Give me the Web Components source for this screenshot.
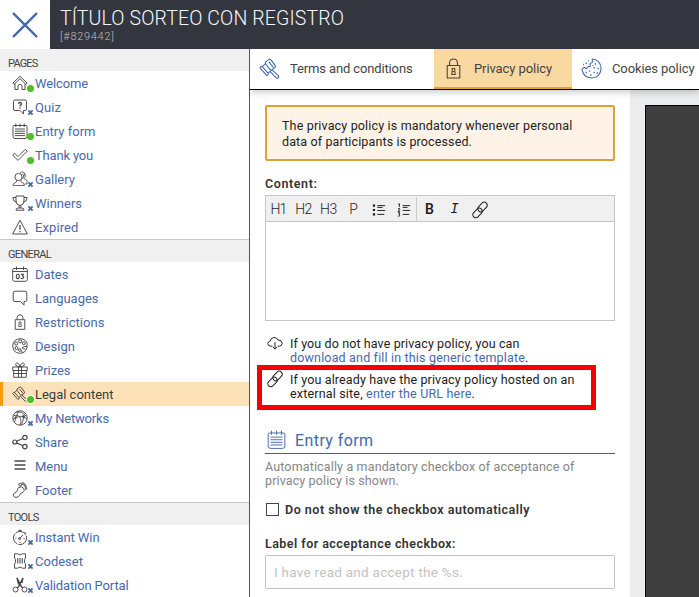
<!DOCTYPE html>
<html lang="en">
<head>
<meta charset="utf-8">
<title>Legal content</title>
<style>
html,body{margin:0;padding:0}
body{width:699px;height:597px;overflow:hidden;background:#fff;font-family:Roboto,"Liberation Sans",sans-serif;font-size:13px;color:#333}
</style>
</head>
<body>
<promo-app></promo-app>
<script>
const ICONS = {
  home:'<path d="M.8 8.2 8 1.2l7.200 7-1.300 1.200L8 3.700 2.100 9.400zM3 8.800V14.500H6V10.500Q8 8 10 10.500V14.500H13V8.800"/>',
  quiz:'<path d="M3 1H13Q14.500 1 14.500 2.500V10Q14.500 11.500 13 11.500H11.500V15L8 11.500H3Q1.500 11.500 1.500 10V2.500Q1.500 1 3 1Z"/><path stroke-width="1.300" d="M6.300 4.700Q6.500 3.500 8 3.500 9.700 3.600 9.600 4.900 9.500 5.900 8 6.500V7.500M8 8.500V9.700"/>',
  form:'<path d="M2 2.500H14Q15 2.500 15 3.500V13.500Q15 15.500 13 15.500H3Q1 15.500 1 13.500V3.500Q1 2.500 2 2.500ZM3.800.5V4M8 .5V4M12.200.5V4M3 6H13M3 8.200H13M3 10.400H13M3 12.600H13"/>',
  check:'<path d="M.8 8.300 2.700 6.400 6 9.600 13.300 2.300 15.200 4.200 6 13.400Z"/>',
  gallery:'<circle cx="6.500" cy="6" r="3.600"/><path stroke-width=".8" d="M8 2.200Q8 .8 10.500.8 13.700 1.500 13.300 5 13 6.500 12 7.500L15 9.500V13H12.500M10 3Q12 3 11.500 6L10.500 8M4.500 9.300V11Q1 11.500.8 14.500H12.500Q12 11.500 9 11V9.300M13 4.500 12 2.500"/>',
  cup:'<path d="M4 1H12V6Q12 10 8 10.500 4 10 4 6ZM4 2.500H.8Q1 7 5 7.500M12 2.500H15.200Q15 7 11 7.500M7.200 10.500V13M8.800 10.500V13M4 15.200Q4 13 6 13H10Q12 13 12 15.200Z"/>',
  warn:'<path d="M8 1.200 15.400 15H.6Z"/><path stroke-width="1.300" d="M8 6V10.700M8 12V13.300"/>',
  date:'<path d="M2 2.500H14Q15.300 2.500 15.300 4V13.500Q15.300 15.300 13.500 15.300H2.500Q.7 15.300.7 13.500V4Q.7 2.500 2 2.500ZM.8 5.500H15.200M4.500.5V4M11.500.5V4"/><g stroke-width="1.100"><ellipse cx="5.800" cy="10.400" rx="1.500" ry="2.200"/><path d="M9 8.300H11.600L10.200 9.900Q12 10 11.700 11.500 10.800 13.200 8.800 12.200"/></g>',
  speech:'<path d="M3 1.200H13Q14.800 1.200 14.800 3V10Q14.800 11.500 13.200 11.500H12V15.200L8.500 11.500H3Q1.200 11.500 1.200 10V3Q1.200 1.200 3 1.200Z"/>',
  lock:'<path d="M3.200 5.700H12.800V15.300H3.200ZM5 5.500V3.500Q5.300.8 8 .8 10.700.8 11 3.500V5.500"/><path stroke-width=".8" d="M7 8H9V10.200L9.300 12.500H6.700L7 10.200ZM7.500 10.300H8.500"/>',
  palette:'<path d="M15.300 8Q14.500 15.300 7.500 15.300 1.300 14.800.7 8 1.300 1.200 8 .7 14.200 1 15.300 6L14.500 8.500 12.300 8.500 10 9.800Q11 11 13.500 11M10.500 14.800 9.500 12.500"/><circle cx="4.200" cy="5.500" r="1.500"/><circle cx="8.200" cy="3.400" r="1.500"/><circle cx="11.800" cy="5.200" r="1.400"/><circle cx="4.500" cy="10" r="1.500"/><circle cx="7.800" cy="12" r="1.300"/>',
  gift:'<path d="M.7 5H15.300V8.500H.7ZM1.700 8.500H14.300V15.300H1.700ZM6.500 5V15.300M9.500 5V15.300M1.700 11.500H14.300M7.500 5Q3.500 4.500 3.500 2 4.500.2 6.300 1.500 7.500 2.500 8 5 8.500 2.500 9.700 1.500 11.500.2 12.500 2 12.500 4.500 8.500 5"/>',
  gavel:'<path d="M5 3 8 .8 9.300 1.600 12.500 6 12.300 7.200 9.500 9.200 8.300 8.700 4.900 4.300ZM4.900 4.300 2.500 6.500 1.800 6.200.7 7.500 6 13.500 7.200 12.500 6.900 11.500 9.500 9.200M2.500 6.500 6.900 11.500M7.500 3 11 7.300M9.900 9 14.800 13.500Q15.500 14.500 14.600 15.200 13.700 15.600 12.900 14.900L8.600 10.300"/>',
  net:'<circle cx="8" cy="8" r="7.200"/><path stroke-width=".85" d="M1.200 5.800Q7 4 8.500 8.500 10 12 8 15M4 2.200Q10 1 14 6M1 9Q5 6 11 6.500L15 9M2.500 12.500Q3 7 7 1M12 7 9.500 14.800"/><circle cx="11.500" cy="6.500" r="1.100" fill="currentColor"/><circle cx="4" cy="7.500" r=".7" fill="currentColor"/>',
  share:'<g stroke-width="1.200"><circle cx="2.800" cy="8" r="2"/><circle cx="12.900" cy="3.500" r="2.200"/><circle cx="12.900" cy="12.600" r="2.200"/><path d="M4.700 7.200 10.700 4.500M4.700 8.900 10.700 11.700"/></g>',
  menu:'<path stroke-width="1.700" d="M2.500 3H13.500M2.500 7H13.500M2.500 11H13.500"/>',
  foot:'<path d="M6.500 5.500Q9.300 3.800 11.600 6.200 13.500 9 10.800 10.500 8.500 10.500 7.500 13.500 6 15.800 3 15.300.2 14 1.500 11.800L4.800 9.600Q5.400 7 6.500 5.500Z"/><circle cx="8.200" cy="2.600" r="1.400"/><circle cx="10.900" cy="1.600" r="1"/><circle cx="12.700" cy="2.900" r=".9"/><circle cx="13.800" cy="4.800" r=".8"/><circle cx="14.100" cy="6.800" r=".7"/>',
  watch:'<circle cx="8" cy="9" r="6.600" stroke-dasharray="12 1"/><path d="M6.300 1.300H9.700M8 1.300V3M12.500 3 14 4.500M7.500 9.700 11 6M3.500 9H4.500M11.500 9.500H12.500M8 13V14"/><circle cx="7.600" cy="9.600" r="1"/>',
  ticket:'<path d="M2.500.8H5.500Q8 3 10.500.8H13.500V5L12.500 6.500V9.500L13.500 11V15.200H10.500Q8 13 5.500 15.200H2.500V11L3.500 9.500V6.500L2.500 5Z"/><path stroke-width=".8" d="M5.500 5V10.500M7.200 5V10.500M8.800 5V10.500M10.500 5V10.500"/>',
  cut:'<circle cx="3.500" cy="12.500" r="2.500"/><circle cx="12.500" cy="12.500" r="2.500"/><path stroke-width="1.400" d="M5 .8 9.500 10 11 11M11 .8 6.500 10 5 11M5 .8 6.200 6 8 9M11 .8 9.800 6"/>',
  cookie:'<path d="M8.500.7Q15 1.300 15.300 8 14.700 15 8 15.300 1.500 14.800.7 8.500L2.500 7 4 8.200 5.500 6.500 7.200 6.300 6.800 4.300 8.700 3.200Z"/><path stroke-width="1.100" d="M10.500 4.500H11.500M9.500 7.500H10.500M12.500 8H13.500M6 10H7M9.500 11H10.500M7 13H8M12 11.500H13M3.500 11H4.500M3.500 4H4.500M5.300 2.200H6M1.500 5H2.200M8.800 5.800H9.500"/>',
  cloud:'<path d="M5.500 10.200H3.500Q.8 10 .8 7.500 1 5.500 3.200 5 3.500 1.800 7 1.500 10 1.500 11 4 15 4 15.200 7.200 15 10 12.500 10.200H10.500M8 6V13M6 11 8 13.200 10 11"/>',
  link:'<rect x="5.100" y="2" width="10.800" height="6" rx="3" transform="rotate(-45 10.500 5)"/><rect x=".1" y="8" width="10.800" height="6" rx="3" transform="rotate(-45 5.500 11)"/>',
  close:'<path d="M1 1 15 15M15 1 1 15" stroke-linecap="round"/>',
  bullets:'<path d="M6 3H15M6 5H12M6 8.500H15M6 13H14" stroke-width="1.100"/><path stroke-width="2.300" d="M1 3H3.500M1 8H3.500M1 13H3.500"/>',
  numbers:'<path d="M6.500 3H15M6.500 5H12M6.500 8.500H15M6.500 13H14M1.500 1.500 2.700.8V4.500M1.200 6.500Q3 5.500 3.300 7L1.200 9.500H3.500M1.200 11.200H3.300L2.200 12.800Q4 13.500 3 14.700 2 15.600 1 14.800" stroke-width="1.100"/>'
};

const define = (tag, css, html) => customElements.define(tag, class extends HTMLElement {
  constructor() { super(); this.attachShadow({mode:'open'}); }
  connectedCallback() {
    this.shadowRoot.innerHTML = `<style>${css}</style>${typeof html === 'function' ? html(this) : html}`;
  }
});

/* Single line of text tracked out to a given width */
const fitted = [];
customElements.define('fit-text', class extends HTMLElement {
  constructor() {
    super();
    this.attachShadow({mode:'open'}).innerHTML = '<style>:host{display:inline-block;white-space:pre}</style><slot></slot>';
  }
  connectedCallback() { fitted.push(this); }
  fit() {
    const extra = this.getAttribute('w') - this.getBoundingClientRect().width;
    this.style.letterSpacing = (extra / this.textContent.length).toFixed(3) + 'px';
  }
});

define('line-icon', `:host{display:block;width:16px;height:16px;flex:none}svg{display:block;width:100%;height:100%;overflow:visible;fill:none;stroke:currentColor;stroke-linejoin:round}`,
  h => `<svg viewBox="0 0 16 16" stroke-width="${h.getAttribute('weight') || .95}">${ICONS[h.getAttribute('name')]}</svg>`);

define('top-bar', `:host{display:flex;height:49px;background:#33363f;color:#f6f6f7}
.x{width:50px;background:#fff;display:grid;place-items:center;color:#4467ad}
.x line-icon{width:26px;height:26px}
.t{padding:7px 0 0 10px;display:flex;flex-direction:column;align-items:flex-start}
.a{font-size:19.500px;line-height:23px;font-weight:350}.b{font-size:11px;line-height:13px;color:#bcbec1;font-weight:350}`,
  `<div class="x"><line-icon name="close" weight="1.400"></line-icon></div><div class="t"><fit-text class="a" w="284">TÍTULO SORTEO CON REGISTRO</fit-text><fit-text class="b" w="54.500">[#829442]</fit-text></div>`);

define('side-group', `:host{display:block}header{box-sizing:border-box;height:23px;padding:5px 0 0 8px;line-height:19px;font-size:11px;background:#f0f0f0;border-top:1px solid #c9c9c9;color:#444;overflow:hidden}:host([first]) header{height:22px;border:0}`,
  h => `<header><fit-text w="${h.getAttribute('w')}">${h.getAttribute('label')}</fit-text></header><slot></slot>`);

define('side-item', `:host{display:flex;box-sizing:border-box;height:24px;padding:0 0 0 12px;gap:7px;align-items:center;color:#4969a9;line-height:24px}
:host([active]){background:#fde2b9;color:#3b3b3b;border-left:3px solid #f29f0e;padding-left:9px}
.i{position:relative;color:#484848;width:16px;height:16px}
.i b{position:absolute;left:15px;top:10px;width:7px;height:7px;border-radius:50%;background:#4fbd28}
:host([active]) .i b{box-shadow:0 0 0 1px #fff}
.i svg{position:absolute;left:16px;top:11px;width:5px;height:5px;stroke:#4467ad;stroke-width:1.800;overflow:visible}
fit-text{padding-top:2px}`,
  h => { const s = h.getAttribute('state');
    const badge = s === 'on' ? '<b></b>' : s === 'off' ? '<svg viewBox="0 0 5 5"><path d="M.4.4 4.600 4.600M4.600.4.4 4.600"/></svg>' : '';
    return `<div class="i"><line-icon name="${h.getAttribute('icon')}"></line-icon>${badge}</div><fit-text w="${h.getAttribute('w')}">${h.textContent}</fit-text>`; });

define('side-nav', `:host{display:block;width:249px;height:548px;overflow:hidden;border-right:1px solid #555;background:#fff}`, `
<side-group first label="PAGES" w="29.500">
<side-item icon="home" state="on" w="53">Welcome</side-item>
<side-item icon="quiz" state="off" w="26">Quiz</side-item>
<side-item icon="form" state="on" w="60.500">Entry form</side-item>
<side-item icon="check" state="on" w="58">Thank you</side-item>
<side-item icon="gallery" state="off" w="40">Gallery</side-item>
<side-item icon="cup" state="off" w="47">Winners</side-item>
<side-item icon="warn" w="43.500">Expired</side-item>
</side-group>
<side-group label="GENERAL" w="43">
<side-item icon="date" w="33.500">Dates</side-item>
<side-item icon="speech" w="63.500">Languages</side-item>
<side-item icon="lock" w="69.500">Restrictions</side-item>
<side-item icon="palette" w="40">Design</side-item>
<side-item icon="gift" w="35.500">Prizes</side-item>
<side-item icon="gavel" state="on" active w="78.500">Legal content</side-item>
<side-item icon="net" state="off" w="74">My Networks</side-item>
<side-item icon="share" w="33.500">Share</side-item>
<side-item icon="menu" w="32.500">Menu</side-item>
<side-item icon="foot" w="37.500">Footer</side-item>
</side-group>
<side-group label="TOOLS" w="30.500">
<side-item icon="watch" state="off" w="64.500">Instant Win</side-item>
<side-item icon="ticket" state="off" w="48">Codeset</side-item>
<side-item icon="cut" state="off" w="93.500">Validation Portal</side-item>
</side-group>`);

define('tab-item', `:host{display:flex;box-sizing:border-box;height:40px;align-items:center;padding:0 0 1px 9px;gap:9px;color:#444}
line-icon{width:21px;height:21px;padding-right:1px;color:#4467ad}
:host([active]){background:#fad8a2;border-bottom:2px solid #e6a132;padding-top:1px;padding-bottom:0}
:host([active]) line-icon{color:#4a4034}`,
  h => `<line-icon name="${h.getAttribute('icon')}" weight=".8"></line-icon><fit-text w="${h.getAttribute('w')}">${h.textContent}</fit-text>`);

define('tab-bar', `:host{display:grid;grid-template-columns:184px 138px 127px;border-bottom:1px solid #000;box-shadow:0 2px 7px rgba(0,0,0,.22);background:#fff;position:relative;z-index:1}`,
  `<tab-item icon="gavel" w="122.500">Terms and conditions</tab-item><tab-item icon="lock" active w="78">Privacy policy</tab-item><tab-item icon="cookie" w="82.500">Cookies policy</tab-item>`);

define('notice-box', `:host{display:block;box-sizing:border-box;height:56px;border:2px solid #dea037;border-radius:2px;background:#fef3e6;padding:11px 15px;line-height:16px;font-size:12.500px;color:#222}`, `<slot></slot>`);

define('rich-editor', `:host{display:block;box-sizing:border-box;height:126px;border:1px solid #c6c6c6}
.bar{display:grid;grid-template-columns:25px 25px 25px 25px 25px 26px 25px 25px 26px;box-sizing:border-box;height:26px;border-bottom:1px solid #c6c6c6;background:#f0f0f0;color:#1c1c1c;place-items:center;font-size:14px;line-height:27px;font-weight:350;justify-content:start}
.n{width:14px;height:14px}.s{box-sizing:border-box;width:100%;height:25px;display:grid;place-items:center;border-right:1px solid #ccc}
b{font-weight:600}i{font-family:"Liberation Mono",monospace;font-size:14px}`,
 `<div class="bar"><fit-text w="16">H1</fit-text><fit-text w="16.500">H2</fit-text><fit-text w="17">H3</fit-text><span>P</span><line-icon class="n" name="bullets"></line-icon><span class="s"><line-icon class="n" name="numbers"></line-icon></span><b>B</b><i>I</i><line-icon name="link"></line-icon></div>`);

define('hint-row', `:host{display:flex;position:relative;gap:7px;padding-left:2px;height:28px;line-height:14px;font-size:12.500px;color:#1d1d1d}
line-icon{margin-top:-1px}
:host([marked]) line-icon{margin-top:-2px}
:host([marked])::after{content:"";position:absolute;left:-8px;top:-8px;width:329px;height:35px;border:5px solid #f40000}`,
 h => `<line-icon name="${h.getAttribute('icon')}"></line-icon><div><slot></slot></div>`);

define('section-title', `:host{display:flex;box-sizing:border-box;height:25px;padding:0 0 1px 2px;gap:9px;align-items:center;color:#4467ad;border-bottom:1px solid #3d5d9b;font-size:16px}line-icon{width:19px;height:19px;margin-top:-2px}`,
 h => `<line-icon name="form" weight=".8"></line-icon><fit-text w="78.500">${h.textContent}</fit-text>`);

define('legal-form', `:host{display:block;box-sizing:border-box;width:380px;padding:15px 15px 0;background:#fff}
.lab{font-weight:600;font-size:12.500px;line-height:16px;color:#333}
.c{margin-top:15px;height:19px}
hint-row{margin-top:16px}hint-row+hint-row{margin-top:8px}
.l{color:#4969a9}
section-title{margin-top:28px}
.p{margin-top:6px;height:28px;line-height:14px;font-size:12.500px;color:#858585}
.k{display:flex;gap:6px;align-items:center;margin-top:14px;padding-left:1px;height:16px}
.k span{box-sizing:border-box;width:13px;height:13px;border:1px solid #444;margin-bottom:2px}
.f{margin-top:18px;height:19px}
.in{box-sizing:border-box;height:34px;border:1px solid #c4c4c4;border-radius:2px;padding-left:8px;line-height:33px;color:#c4c4c4;font-size:13.500px}`, `
<notice-box><fit-text w="290.500">The privacy policy is mandatory whenever personal</fit-text><br><fit-text w="190">data of participants is processed.</fit-text></notice-box>
<div class="lab c"><fit-text w="52.500">Content:</fit-text></div>
<rich-editor></rich-editor>
<hint-row icon="cloud"><fit-text w="229.500">If you do not have privacy policy, you can</fit-text><br><fit-text w="238"><span class="l">download and fill in this generic template</span>.</fit-text></hint-row>
<hint-row icon="link" marked><fit-text w="284.500">If you already have the privacy policy hosted on an</fit-text><br><fit-text w="185">external site, <span class="l">enter the URL here</span>.</fit-text></hint-row>
<section-title>Entry form</section-title>
<div class="p"><fit-text w="309.500">Automatically a mandatory checkbox of acceptance of</fit-text><br><fit-text w="134">privacy policy is shown.</fit-text></div>
<div class="lab k"><span></span><fit-text w="245">Do not show the checkbox automatically</fit-text></div>
<div class="lab f"><fit-text w="191">Label for acceptance checkbox:</fit-text></div>
<div class="in"><fit-text w="189">I have read and accept the %s.</fit-text></div>`);

define('preview-pane', `:host{display:block;flex:1;box-sizing:border-box;padding:15px 0 0 15px;background:#ebecee}div{box-sizing:border-box;height:492px;background:#3f3f3f;border:solid #000;border-width:1px 0 0 1px}`, `<div></div>`);

define('promo-app', `:host{display:block;width:699px;height:597px;overflow:hidden}.body{display:flex;height:548px}main{width:449px;height:548px;overflow:hidden}.cols{display:flex;height:507px}`,
 `<top-bar></top-bar><div class="body"><side-nav></side-nav><main><tab-bar></tab-bar><div class="cols"><legal-form></legal-form><preview-pane></preview-pane></div></main></div>`);

fitted.forEach(t => t.fit());
</script>
</body>
</html>
